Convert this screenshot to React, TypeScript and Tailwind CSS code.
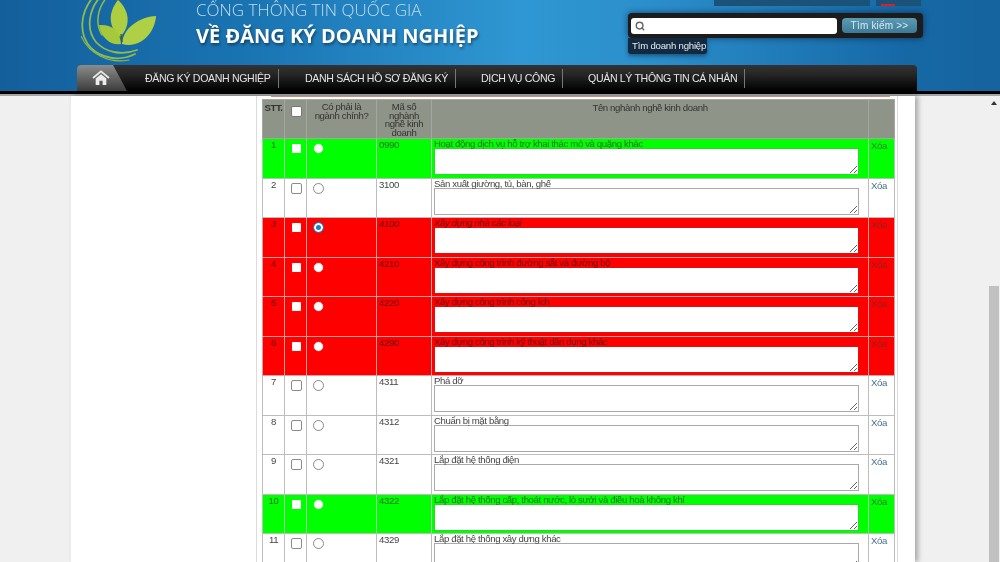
import React from 'react';
import { Search } from 'lucide-react';

type Tone = 'plain' | 'green' | 'red';

interface Row {
  stt: number;
  code: string;
  name: string;
  tone: Tone;
  italic?: boolean;
  selected?: boolean;
}

const rows: Row[] = [
  { stt: 1, code: '0990', name: 'Hoạt động dịch vụ hỗ trợ khai thác mỏ và quặng khác', tone: 'green' },
  { stt: 2, code: '3100', name: 'Sản xuất giường, tủ, bàn, ghế', tone: 'plain' },
  { stt: 3, code: '4100', name: 'Xây dựng nhà các loại', tone: 'red', italic: true, selected: true },
  { stt: 4, code: '4210', name: 'Xây dựng công trình đường sắt và đường bộ', tone: 'red' },
  { stt: 5, code: '4220', name: 'Xây dựng công trình công ích', tone: 'red' },
  { stt: 6, code: '4290', name: 'Xây dựng công trình kỹ thuật dân dụng khác', tone: 'red' },
  { stt: 7, code: '4311', name: 'Phá dỡ', tone: 'plain' },
  { stt: 8, code: '4312', name: 'Chuẩn bị mặt bằng', tone: 'plain' },
  { stt: 9, code: '4321', name: 'Lắp đặt hệ thống điện', tone: 'plain' },
  { stt: 10, code: '4322', name: 'Lắp đặt hệ thống cấp, thoát nước, lò sưởi và điều hoà không khí', tone: 'green' },
  { stt: 11, code: '4329', name: 'Lắp đặt hệ thống xây dựng khác', tone: 'plain' },
];

const toneStyles = {
  plain: {
    row: 'bg-white text-[#444]',
    cell: 'border-[#bdbdbd]',
    box: 'border-[#8a8a8a]',
    area: 'border-[#a9a9a9]',
    link: 'text-[#47708c]',
  },
  green: {
    row: 'bg-[#00ff00] text-[#1c701c]',
    cell: 'border-[#a9c9a9]',
    box: 'border-[#00ff00]',
    area: 'border-[#22dd22]',
    link: 'text-[#2a802a]',
  },
  red: {
    row: 'bg-[#ff0000] text-[#640c0c]',
    cell: 'border-[#d9a0a0]',
    box: 'border-[#ff0000]',
    area: 'border-[#e01010]',
    link: 'text-[#8f2020]',
  },
};

const navItems = [
  { label: 'ĐĂNG KÝ DOANH NGHIỆP', cls: 'w-[152px] pl-[18px]' },
  { label: 'DANH SÁCH HỒ SƠ ĐĂNG KÝ', cls: 'w-[177px] pl-[26px]' },
  { label: 'DỊCH VỤ CÔNG', cls: 'w-[107px] pl-[25px]' },
  { label: 'QUẢN LÝ THÔNG TIN CÁ NHÂN', cls: 'w-[182px] pl-[25px]' },
];

const Logo = () => (
  <svg viewBox="0 0 76 65" className="w-[76px] h-[65px] shrink-0">
    <g fill="none" stroke="#8fbb4a" strokeLinecap="round">
      <path d="M13 -4 C-1 12 -3 34 10 48 C20 58 38 62 54 54" strokeWidth="1.8" />
      <path d="M20 -4 C7 10 5 30 15 42 C24 52 40 56 56 50" strokeWidth="1.8" />
      <path d="M27 -4 C16 8 14 24 21 35" strokeWidth="1.5" />
      <path d="M0 36 C8 54 28 64 48 60" strokeWidth="1.1" />
    </g>
    <path d="M39 37 C27 27 27 12 37 0 C49 11 50 26 39 37 Z" fill="#acce40" />
    <path d="M40 44 C30 46 20 38 18 25 C31 24 39 31 40 44 Z" fill="#a6c93c" />
    <path d="M41 44 C42 28 58 17 75 16 C74 33 59 49 41 44 Z" fill="#afd044" />
    <path d="M40 34 L41 42" stroke="#4a5a3a" strokeWidth="1.4" />
  </svg>
);

const HomeIcon = () => (
  <svg viewBox="0 0 20 18" className="w-[18px] h-[16px]">
    <path d="M1 9 L10 1.5 L19 9" fill="none" stroke="#e8e8e8" strokeWidth="2" />
    <path d="M4 9.5 L10 4.8 L16 9.5 V17 H11.8 V12 H8.2 V17 H4 Z" fill="#ececec" />
  </svg>
);

const Header = () => (
  <header className="h-[91px] shrink-0 flex flex-col bg-[linear-gradient(90deg,#135f9c_0%,#1a74b2_25%,#2f97d3_52%,#2b8fcb_65%,#1669a6_90%,#15639f_100%)]">
    <div className="h-[65px] flex pl-[81px] overflow-hidden">
      <Logo />
      <div className="ml-[39px] w-[432px] font-['Open_Sans',sans-serif]">
        <div className="text-[17px] leading-[19px] font-light text-[#c4dceb]">CỔNG THÔNG TIN QUỐC GIA</div>
        <div className="mt-[5px] text-[20px] leading-[24px] font-bold text-white [text-shadow:1px_2px_3px_rgba(0,0,0,0.45)] whitespace-nowrap">
          VỀ ĐĂNG KÝ DOANH NGHIỆP
        </div>
      </div>
      <div className="w-[295px] flex flex-col items-start font-['Liberation_Sans',sans-serif]">
        <div className="h-[6px] w-full flex pl-[86px] gap-[6px]">
          <div className="w-[156px] bg-[#1b5279]" />
          <div className="w-[45px] bg-[#1b5279] flex items-end overflow-hidden pl-[5px]">
            <div className="w-[14px] h-[2px] bg-[#e02020]" />
          </div>
        </div>
        <div className="mt-[7px] w-full h-[25px] bg-[#1c1c1c] rounded-[4px] flex items-center pl-[3px] shadow-[0_0_6px_rgba(10,30,60,0.7)]">
          <div className="w-[206px] h-[16px] bg-white rounded-[3px] flex items-center pl-[4px]">
            <Search size={10} strokeWidth={3.5} className="text-[#666]" />
          </div>
          <button className="ml-[5px] w-[75px] h-[15px] rounded-[4px] bg-[linear-gradient(#5b9ab5,#3c7a96)] text-[#d8eaf2] text-[10px] leading-[15px] tracking-[0.2px]">
            Tìm kiếm &gt;&gt;
          </button>
        </div>
        <div className="h-[16px] w-[79px] bg-[#12293f] rounded-b-[3px] text-[#e8eef2] text-[9.6px] leading-[16px] tracking-[-0.2px] pl-[4px] whitespace-nowrap shadow-[0_2px_4px_rgba(10,30,60,0.5)]">
          Tìm doanh nghiệp
        </div>
      </div>
    </div>
    <nav className="ml-[77px] w-[840px] h-[26px] flex rounded-t-[4px] bg-[linear-gradient(#333333,#262626_35%,#000000)] font-['Liberation_Sans',sans-serif]">
      <div className="w-[50px] h-full rounded-tl-[4px] flex items-center pl-[15px] bg-[linear-gradient(#8c8c8c,#3c3c3c)] [clip-path:polygon(0_0,72%_0,100%_100%,0_100%)]">
        <HomeIcon />
      </div>
      {navItems.map((item) => (
        <div key={item.label} className={`${item.cls} h-[19px] mt-[4px] border-r border-[#777] text-[#e4e4e4] text-[10.6px] tracking-[-0.35px] leading-[19px] whitespace-nowrap`}>
          {item.label}
        </div>
      ))}
    </nav>
  </header>
);

const CheckCell = ({ box }: { box: string }) => (
  <input type="checkbox" className={`appearance-none block w-[11px] h-[11px] bg-white border rounded-[2px] ${box}`} />
);

const TableRow = ({ row, index }: { row: Row; index: number }) => {
  const t = toneStyles[row.tone];
  const cell = `border ${t.cell} align-top p-0`;
  return (
    <tr className={`${index % 2 === 0 ? 'h-[40px]' : 'h-[39px]'} ${t.row} ${row.italic ? 'italic' : ''}`}>
      <td className={`${cell} text-center pt-[1px]`}>{row.stt}</td>
      <td className={`${cell} pl-[6px] pt-[4px]`}>
        <CheckCell box={t.box} />
      </td>
      <td className={`${cell} pl-[6px] pt-[4px]`}>
        <input
          type="radio"
          name={`main-${row.stt}`}
          defaultChecked={row.selected}
          className={`appearance-none block w-[11px] h-[11px] bg-white border rounded-full checked:border-[#1a7fc4] checked:bg-[#1a7fc4] checked:shadow-[inset_0_0_0_2px_white] ${t.box}`}
        />
      </td>
      <td className={`${cell} pl-[2px] pt-[1px]`}>{row.code}</td>
      <td className={`${cell} pl-[2px]`}>
        <div className="h-[9px] leading-[10px] whitespace-nowrap">{row.name}</div>
        <textarea readOnly className={`block w-[425px] h-[27px] bg-white border ${t.area}`} />
      </td>
      <td className={`${cell} pl-[2px] pt-[2px] ${t.link}`}>Xóa</td>
    </tr>
  );
};

const ActivityTable = () => (
  <table className="mt-[2px] table-fixed border-collapse w-[632px] text-[9.6px] tracking-[-0.37px] leading-[10px] font-['Liberation_Sans',sans-serif]">
    <colgroup>
      <col className="w-[22px]" />
      <col className="w-[22px]" />
      <col className="w-[70px]" />
      <col className="w-[55px]" />
      <col className="w-[437px]" />
      <col className="w-[26px]" />
    </colgroup>
    <thead>
      <tr className="h-[39px] bg-[#8e9488] text-[#333]">
        <th className="border border-[#a3a89e] align-top pt-[3px] font-bold">STT.</th>
        <th className="border border-[#a3a89e] align-top pl-[6px] pt-[6px]">
          <CheckCell box="border-[#777]" />
        </th>
        <th className="border border-[#a3a89e] align-top pt-[3px] font-normal leading-[8.5px]">
          Có phải là<br />ngành chính?
        </th>
        <th className="border border-[#a3a89e] align-top pt-[3px] font-normal leading-[8.5px]">
          Mã số<br />nghành<br />nghề kinh<br />doanh
        </th>
        <th className="border border-[#a3a89e] align-top pt-[3px] font-normal">Tên nghành nghề kinh doanh</th>
        <th className="border border-[#a3a89e]" />
      </tr>
    </thead>
    <tbody>
      {rows.map((row, i) => (
        <TableRow key={row.stt} row={row} index={i} />
      ))}
    </tbody>
  </table>
);

export default function App() {
  return (
    <div className="w-[1000px] h-[562px] overflow-hidden flex flex-col bg-[#f0f0f0] blur-[0.3px]">
      <Header />
      <div className="h-[3px] shrink-0 bg-black" />
      <div className="h-[2px] shrink-0 bg-[#a5a5a5]" />
      <div className="flex-1 min-h-0 flex">
        <div className="w-[71px] shrink-0" />
        <main className="w-[844px] shrink-0 bg-white pl-[185px] shadow-[3px_0_5px_rgba(0,0,0,0.3)] z-10">
          <div className="w-[642px] h-full border-x border-[#dcdcdc] pl-[5px]">
            <div className="h-px ml-[9px] w-[619px] bg-[#d08a78]" />
            <ActivityTable />
          </div>
        </main>
        <div className="flex-1" />
        <aside className="w-[13px] shrink-0 flex flex-col items-center">
          <div className="mt-[5px] w-0 h-0 border-x-[3.5px] border-x-transparent border-b-[4px] border-b-[#333]" />
          <div className="mt-[181px] flex-1 w-[10px] bg-[#c1c1c1]" />
        </aside>
      </div>
    </div>
  );
}
